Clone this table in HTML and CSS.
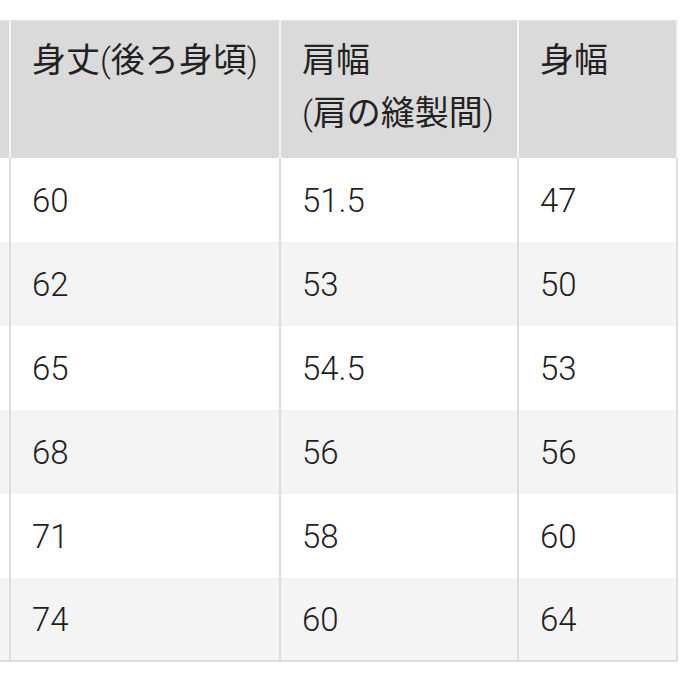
FILE: index.html
```html
<!DOCTYPE html>
<html lang="ja">
<head>
<meta charset="utf-8">
<link rel="stylesheet" href="styles.css">
</head>
<body>
<table class="size-table">
  <colgroup>
    <col class="c0"><col class="c1"><col class="c2"><col class="c3">
  </colgroup>
  <thead>
    <tr>
      <th class="edge"></th>
      <th>身丈<span class="paren">(</span>後ろ身頃<span class="paren">)</span></th>
      <th>肩幅<br><span class="paren">(</span>肩の縫製間<span class="paren">)</span></th>
      <th>身幅</th>
    </tr>
  </thead>
  <tbody>
    <tr><td class="edge"></td><td>60</td><td>51.5</td><td>47</td></tr>
    <tr><td class="edge"></td><td>62</td><td>53</td><td>50</td></tr>
    <tr><td class="edge"></td><td>65</td><td>54.5</td><td>53</td></tr>
    <tr><td class="edge"></td><td>68</td><td>56</td><td>56</td></tr>
    <tr><td class="edge"></td><td>71</td><td>58</td><td>60</td></tr>
    <tr><td class="edge"></td><td>74</td><td>60</td><td>64</td></tr>
  </tbody>
</table>
</body>
</html>
```

FILE: styles.css
```css
html, body {
  margin: 0;
  padding: 0;
  background: #ffffff;
}

body {
  font-family: Roboto, "Noto Sans CJK JP", sans-serif;
  color: #222222;
}

.size-table {
  margin-top: 20px;
  width: 678px;
  table-layout: fixed;
  border-collapse: separate;
  border-spacing: 0;
}

.c0 { width: 11px; }
.c1 { width: 270px; }
.c2 { width: 238px; }
.c3 { width: 159px; }

.size-table th {
  height: 138px;
  box-sizing: border-box;
  padding: 13px 21px 0;
  vertical-align: top;
  text-align: left;
  font-weight: 400;
  font-size: 34px;
  line-height: 53px;
  white-space: nowrap;
  background: #dadada;
  border-right: 2px solid #f3f3f3;
  border-top: 1px solid #e2e2e2;
}

.paren {
  font-weight: 300;
}

.size-table td {
  height: 84px;
  box-sizing: border-box;
  padding: 0 21px;
  vertical-align: middle;
  font-size: 33px;
  font-weight: 300;
  line-height: 33px;
  color: #1e1e1e;
  border-right: 2px solid #dddddd;
}

.size-table th.edge,
.size-table td.edge {
  padding: 0;
}

.size-table tbody tr:nth-child(even) td {
  background: #f4f4f4;
}

.size-table tbody tr:last-child td {
  border-bottom: 2px solid #dddddd;
}
```
